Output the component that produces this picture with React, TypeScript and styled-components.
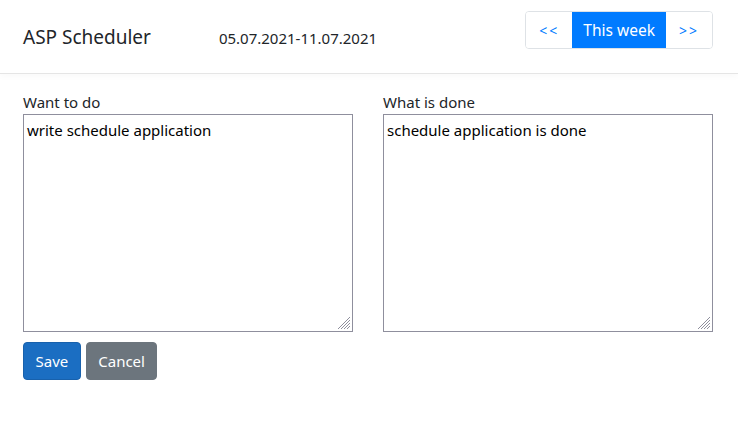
import React from 'react';
import styled, { createGlobalStyle } from 'styled-components';

const GlobalStyle = createGlobalStyle`
  body {
    margin: 0;
    font-family: "Noto Sans", "Open Sans", sans-serif;
    color: #212529;
    background: #fff;
  }
`;

const Header = styled.header`
  display: flex;
  align-items: flex-start;
  height: 73px;
  padding: 0 25px 0 23px;
  border-bottom: 1px solid #e5e5e5;
  box-shadow: 0 3px 6px rgba(0, 0, 0, 0.025);
`;

const Brand = styled.div`
  font-size: 19px;
  line-height: 26px;
  padding-top: 24px;
  color: #212529;
`;

const Range = styled.div`
  font-size: 15px;
  line-height: 22px;
  padding-top: 27px;
  margin-left: 68px;
`;

const NavGroup = styled.div`
  display: flex;
  margin: 11px 0 0 auto;
  border: 1px solid #dee2e6;
  border-radius: 4px;
  overflow: hidden;
`;

const NavButton = styled.button<{ $active?: boolean }>`
  height: 36px;
  padding: 0 ${p => (p.$active ? '11px' : '13px')};
  border: none;
  font-family: inherit;
  font-size: ${p => (p.$active ? '15.5px' : '14px')};
  letter-spacing: ${p => (p.$active ? '0' : '2px')};
  background: ${p => (p.$active ? '#007bff' : '#fff')};
  color: ${p => (p.$active ? '#fff' : '#007bff')};
  cursor: pointer;
`;

const Main = styled.main`
  padding: 16px 25px 0 23px;
`;

const Columns = styled.div`
  display: flex;
  gap: 30px;
`;

const Field = styled.label`
  display: flex;
  flex-direction: column;
  font-size: 15px;
  line-height: 24px;
`;

const AreaBox = styled.div`
  position: relative;
  width: 330px;
  height: 218px;
`;

const Area = styled.textarea`
  display: block;
  width: 100%;
  height: 100%;
  box-sizing: border-box;
  border: 1px solid #8f8f9d;
  padding: 3px 3px;
  font-family: inherit;
  font-size: 15px;
  line-height: 24px;
  color: #000;
  resize: none;
  outline: none;
`;

const Grip = styled.svg`
  position: absolute;
  right: 3px;
  bottom: 3px;
  pointer-events: none;
`;

const Actions = styled.div`
  display: flex;
  gap: 5px;
  margin-top: 10px;
`;

const ActionButton = styled.button<{ $tone: 'primary' | 'secondary' }>`
  height: 38px;
  padding: 0 11.5px;
  border: 1px solid ${p => (p.$tone === 'primary' ? '#1861ac' : '#6c757d')};
  border-radius: 4px;
  background: ${p => (p.$tone === 'primary' ? '#1b6ec2' : '#6c757d')};
  color: #fff;
  font-family: inherit;
  font-size: 15px;
  cursor: pointer;
`;

const ResizeGrip = () => (
  <Grip width="12" height="12" viewBox="0 0 12 12">
    <g stroke="#8f8f9d" strokeWidth="1">
      <line x1="0" y1="12" x2="12" y2="0" />
      <line x1="3" y1="12" x2="12" y2="3" />
      <line x1="6" y1="12" x2="12" y2="6" />
      <line x1="9" y1="12" x2="12" y2="9" />
    </g>
  </Grip>
);

const Note = ({ label, text }: { label: string; text: string }) => (
  <Field>
    {label}
    <AreaBox>
      <Area defaultValue={text} />
      <ResizeGrip />
    </AreaBox>
  </Field>
);

export default function App() {
  return (
    <>
      <GlobalStyle />
      <Header>
        <Brand>ASP Scheduler</Brand>
        <Range>05.07.2021-11.07.2021</Range>
        <NavGroup>
          <NavButton>&lt;&lt;</NavButton>
          <NavButton $active>This week</NavButton>
          <NavButton>&gt;&gt;</NavButton>
        </NavGroup>
      </Header>
      <Main>
        <Columns>
          <Note label="Want to do" text="write schedule application" />
          <Note label="What is done" text="schedule application is done" />
        </Columns>
        <Actions>
          <ActionButton $tone="primary">Save</ActionButton>
          <ActionButton $tone="secondary">Cancel</ActionButton>
        </Actions>
      </Main>
    </>
  );
}
